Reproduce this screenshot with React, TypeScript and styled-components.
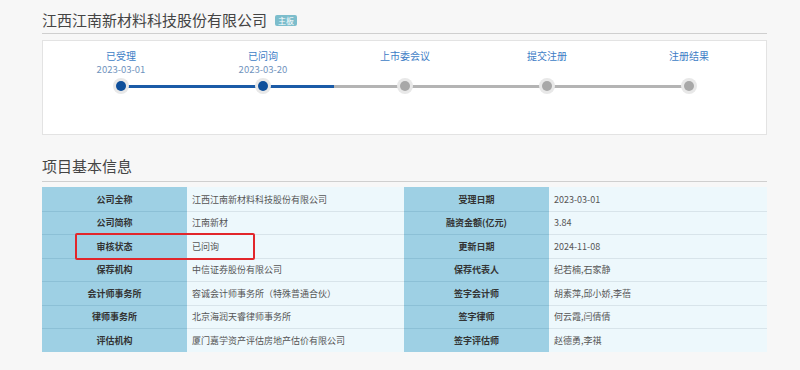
import React from "react";
import styled, { createGlobalStyle } from "styled-components";

const GlobalStyle = createGlobalStyle`
  html, body {
    margin: 0;
    padding: 0;
    background: #f7f7f7;
    font-family: "Noto Sans CJK SC", "Microsoft YaHei", sans-serif;
  }
`;

const Page = styled.div`
  width: 725px;
  padding: 0 0 0 42px;
`;

const TitleBar = styled.div`
  display: flex;
  align-items: center;
  height: 23px;
  padding-top: 10px;
  border-bottom: 1px solid #cfcfcf;
  align-items: flex-start;
`;

const Title = styled.h1`
  margin: 0;
  font-size: 15px;
  font-weight: normal;
  color: #444;
  line-height: 20px;
`;

const Badge = styled.span`
  margin: 5px 0 0 8px;
  padding: 0 3px;
  height: 11px;
  line-height: 11px;
  font-size: 8px;
  color: #fff;
  background: #7cbdcc;
  border-radius: 2px;
`;

const Card = styled.div`
  margin-top: 6px;
  height: 93px;
  padding: 0 7px;
  background: #fff;
  border: 1px solid #e3e3e3;
  display: grid;
  grid-template-columns: repeat(5, 142px);
`;

const Step = styled.div`
  display: flex;
  flex-direction: column;
  align-items: center;
  padding-top: 8px;
`;

const StepName = styled.div`
  font-size: 10px;
  line-height: 14px;
  height: 14px;
  color: #3d7dc6;
`;

const StepDate = styled.div`
  font-size: 9.5px;
  line-height: 13px;
  height: 13px;
  color: #6f93bd;
`;

const Track = styled.div<{ $fill: number; $last: boolean }>`
  position: relative;
  width: 100%;
  height: 16px;
  margin-top: 2px;
  display: flex;
  justify-content: center;

  &::before {
    content: "";
    display: ${(p) => (p.$last ? "none" : "block")};
    position: absolute;
    left: 50%;
    width: 100%;
    top: 6.5px;
    height: 3px;
    background: linear-gradient(
      to right,
      #1b5ba7 0,
      #1b5ba7 ${(p) => p.$fill}%,
      #b4b4b4 ${(p) => p.$fill}%,
      #b4b4b4 100%
    );
  }
`;

const Dot = styled.span<{ $done: boolean }>`
  position: relative;
  z-index: 1;
  width: 16px;
  height: 16px;
  border-radius: 50%;
  background: #e8e8e8;
  display: flex;
  align-items: center;
  justify-content: center;

  &::after {
    content: "";
    width: 10px;
    height: 10px;
    border-radius: 50%;
    background: ${(p) => (p.$done ? "#0e4f9b" : "#a8a8a8")};
  }
`;

const SectionBar = styled.div`
  margin-top: 20px;
  height: 25px;
  padding-top: 1px;
  display: flex;
  align-items: flex-start;
  border-bottom: 1px solid #cfcfcf;
`;

const SectionTitle = styled.h2`
  margin: 0;
  font-size: 15px;
  font-weight: normal;
  color: #444;
  line-height: 20px;
`;

const TableWrap = styled.div`
  position: relative;
  margin-top: 5px;
`;

const Table = styled.div`
  display: grid;
  grid-template-columns: 145px 217px 145px 218px;
`;

const LabelCell = styled.div<{ $first: boolean }>`
  height: 22.5px;
  display: flex;
  align-items: center;
  justify-content: center;
  background: #9ed0e4;
  border-top: 1px solid ${(p) => (p.$first ? "#9ed0e4" : "#8cc0d6")};
  font-size: 9px;
  font-weight: bold;
  color: #333;
`;

const ValueCell = styled.div<{ $first: boolean }>`
  height: 22.5px;
  display: flex;
  align-items: center;
  padding-left: 5px;
  background: #edf8fc;
  border-top: 1px solid ${(p) => (p.$first ? "#edf8fc" : "#d8e4ea")};
  font-size: 9px;
  color: #555;
`;

const Highlight = styled.div`
  position: absolute;
  left: 33px;
  top: 46px;
  width: 176px;
  height: 23px;
  border: 2px solid #e2262b;
  border-radius: 2px;
  pointer-events: none;
`;

const steps = [
  { name: "已受理", date: "2023-03-01", done: true, fill: 100 },
  { name: "已问询", date: "2023-03-20", done: true, fill: 50 },
  { name: "上市委会议", date: "", done: false, fill: 0 },
  { name: "提交注册", date: "", done: false, fill: 0 },
  { name: "注册结果", date: "", done: false, fill: 0 },
];

const rows: [string, string, string, string][] = [
  ["公司全称", "江西江南新材料科技股份有限公司", "受理日期", "2023-03-01"],
  ["公司简称", "江南新材", "融资金额(亿元)", "3.84"],
  ["审核状态", "已问询", "更新日期", "2024-11-08"],
  ["保荐机构", "中信证券股份有限公司", "保荐代表人", "纪若楠,石家静"],
  ["会计师事务所", "容诚会计师事务所（特殊普通合伙）", "签字会计师", "胡素萍,邱小娇,李蓓"],
  ["律师事务所", "北京海润天睿律师事务所", "签字律师", "何云霞,闫倩倩"],
  ["评估机构", "厦门嘉学资产评估房地产估价有限公司", "签字评估师", "赵德勇,李祺"],
];

export default function App() {
  return (
    <Page>
      <GlobalStyle />
      <TitleBar>
        <Title>江西江南新材料科技股份有限公司</Title>
        <Badge>主板</Badge>
      </TitleBar>
      <Card>
        {steps.map((s, i) => (
          <Step key={s.name}>
            <StepName>{s.name}</StepName>
            <StepDate>{s.date}</StepDate>
            <Track $fill={s.fill} $last={i === steps.length - 1}>
              <Dot $done={s.done} />
            </Track>
          </Step>
        ))}
      </Card>
      <SectionBar>
        <SectionTitle>项目基本信息</SectionTitle>
      </SectionBar>
      <TableWrap>
        <Table>
          {rows.map((r, i) => (
            <React.Fragment key={r[0]}>
              <LabelCell $first={i === 0}>{r[0]}</LabelCell>
              <ValueCell $first={i === 0}>{r[1]}</ValueCell>
              <LabelCell $first={i === 0}>{r[2]}</LabelCell>
              <ValueCell $first={i === 0}>{r[3]}</ValueCell>
            </React.Fragment>
          ))}
        </Table>
        <Highlight />
      </TableWrap>
    </Page>
  );
}
